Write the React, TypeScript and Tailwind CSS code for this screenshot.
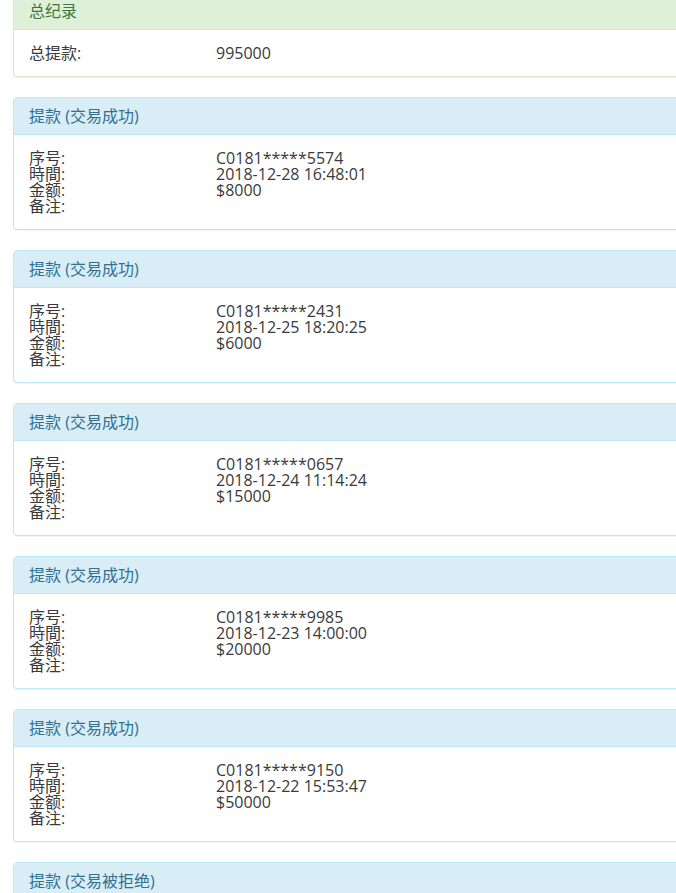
import React from 'react';

interface Record {
  id: string;
  time: string;
  amount: string;
  status: string;
}

const records: Record[] = [
  { id: 'C0181*****5574', time: '2018-12-28 16:48:01', amount: '$8000', status: '交易成功' },
  { id: 'C0181*****2431', time: '2018-12-25 18:20:25', amount: '$6000', status: '交易成功' },
  { id: 'C0181*****0657', time: '2018-12-24 11:14:24', amount: '$15000', status: '交易成功' },
  { id: 'C0181*****9985', time: '2018-12-23 14:00:00', amount: '$20000', status: '交易成功' },
  { id: 'C0181*****9150', time: '2018-12-22 15:53:47', amount: '$50000', status: '交易成功' },
  { id: 'C0181*****7702', time: '2018-12-20 10:12:36', amount: '$30000', status: '交易被拒绝' },
];

const font = { fontFamily: '"Open Sans", "Noto Sans CJK SC", sans-serif' };

const App: React.FC = () => {
  return (
    <div className="w-full overflow-hidden bg-white text-[16px] text-[#3a3a3a]" style={font}>
      <div className="pl-[13px] -mr-[30px] -mt-[8px]">
        {/* 总纪录 */}
        <div className="mb-5 rounded border border-[#d6e9c6] bg-white shadow-[0_1px_1px_rgba(0,0,0,0.05)]">
          <div className="rounded-t border-b border-[#d6e9c6] bg-[#dff0d8] px-[15px] py-[10px] leading-4 text-[#3c763d]">
            总纪录
          </div>
          <div className="grid grid-cols-[187px_1fr] p-[15px] leading-4">
            <div>总提款:</div>
            <div>995000</div>
          </div>
        </div>

        {records.map((r, idx) => (
          <div
            key={idx}
            className="mb-5 rounded border border-[#bce8f1] bg-white shadow-[0_1px_1px_rgba(0,0,0,0.05)]"
          >
            <div className="rounded-t border-b border-[#bce8f1] bg-[#d9edf7] px-[15px] py-[10px] leading-4 text-[#31708f]">
              提款 ({r.status})
            </div>
            <div className="grid grid-cols-[187px_1fr] p-[15px] leading-4">
              <div>序号:</div>
              <div>{r.id}</div>
              <div>時間:</div>
              <div>{r.time}</div>
              <div>金额:</div>
              <div>{r.amount}</div>
              <div>备注:</div>
              <div></div>
            </div>
          </div>
        ))}
      </div>
    </div>
  );
};

export default App;
